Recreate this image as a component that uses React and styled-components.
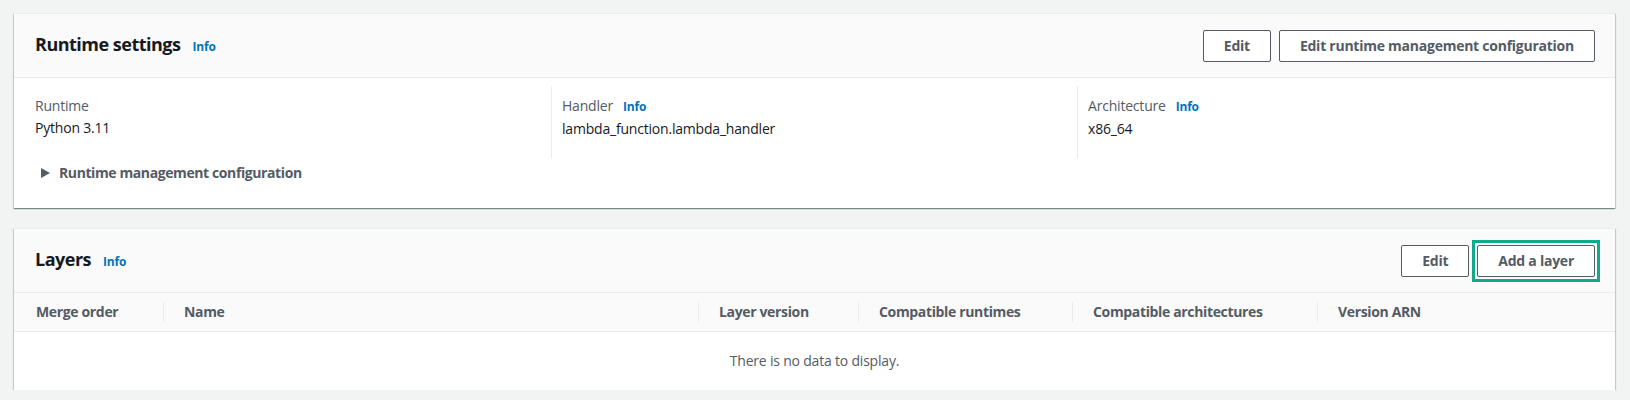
import React from 'react';
import styled, { createGlobalStyle } from 'styled-components';

const GlobalStyle = createGlobalStyle`
  body {
    margin: 0;
    background: #f2f3f3;
    font-family: "Open Sans", "Liberation Sans", Arial, sans-serif;
    font-size: 14px;
    line-height: 22px;
    color: #16191f;
  }
`;

const Page = styled.div`
  display: flex;
  flex-direction: column;
  gap: 20px;
  padding: 13px 15px 0 14px;
`;

const Card = styled.section`
  background: #ffffff;
  border-top: 1px solid #eaeded;
  box-shadow: 0 1px 1px 0 rgba(0, 28, 36, 0.3),
    1px 1px 1px 0 rgba(0, 28, 36, 0.15),
    -1px 1px 1px 0 rgba(0, 28, 36, 0.15);
`;

const CardHeader = styled.header`
  display: flex;
  align-items: center;
  justify-content: space-between;
  height: 63px;
  padding: 0 20px 0 21px;
  background: #fafafa;
  border-bottom: 1px solid #eaeded;
`;

const TitleGroup = styled.div`
  display: flex;
  align-items: baseline;
`;

const Title = styled.h2`
  margin: 0;
  font-size: 18px;
  line-height: 22px;
  font-weight: 700;
  letter-spacing: -0.5px;
  color: #16191f;
`;

const InfoLink = styled.a`
  margin-left: ${(p) => (p.$tight ? '10px' : '12px')};
  font-size: 12px;
  font-weight: 700;
  letter-spacing: -0.2px;
  color: #0073bb;
  text-decoration: none;
  cursor: pointer;
`;

const Actions = styled.div`
  display: flex;
  gap: 8px;
`;

const Button = styled.button`
  position: relative;
  height: 32px;
  padding: 0 20px;
  background: #ffffff;
  border: 1px solid #545b64;
  border-radius: 2px;
  font-family: inherit;
  font-size: 14px;
  font-weight: 700;
  letter-spacing: -0.25px;
  color: #545b64;
  cursor: pointer;

  &::after {
    content: '';
    display: ${(p) => (p.$highlighted ? 'block' : 'none')};
    position: absolute;
    inset: -6px;
    border: 3px solid #12a88a;
  }
`;

const Body = styled.div`
  padding: 8px 20px 24px 21px;
`;

const Columns = styled.div`
  display: grid;
  grid-template-columns: 516px 526px 1fr;
`;

const Column = styled.div`
  padding: 9px 0 18px ${(p) => (p.$first ? '0' : '10px')};
  border-left: ${(p) => (p.$first ? 'none' : '1px solid #eaeded')};
  letter-spacing: -0.2px;
`;

const Label = styled.div`
  display: flex;
  align-items: baseline;
  color: #545b64;
`;

const Value = styled.div`
  color: #16191f;
`;

const Expander = styled.div`
  display: flex;
  align-items: center;
  gap: 9px;
  margin-top: 4px;
  padding-left: 6px;
  font-weight: 700;
  letter-spacing: -0.4px;
  color: #545b64;
  cursor: pointer;
`;

const TableHead = styled.div`
  display: grid;
  grid-template-columns: 149px 535px 160px 214px 245px 1fr;
  height: 38px;
  background: #fafafa;
  border-bottom: 1px solid #eaeded;
`;

const HeadCell = styled.div`
  display: flex;
  align-items: center;
  padding-left: ${(p) => (p.$first ? '22px' : '0')};
  font-weight: 700;
  letter-spacing: -0.35px;
  color: #545b64;

  &::before {
    content: '';
    display: ${(p) => (p.$first ? 'none' : 'block')};
    width: 1px;
    height: 20px;
    margin-right: 20px;
    background: #eaeded;
  }
`;

const Empty = styled.div`
  display: flex;
  align-items: center;
  justify-content: center;
  height: 58px;
  letter-spacing: -0.2px;
  color: #545b64;
`;

const Caret = () => (
  <svg width="9" height="10" viewBox="0 0 9 10">
    <polygon points="0,0 9,5 0,10" fill="#545b64" />
  </svg>
);

const tableColumns = [
  'Merge order',
  'Name',
  'Layer version',
  'Compatible runtimes',
  'Compatible architectures',
  'Version ARN',
];

export default function App() {
  return (
    <>
      <GlobalStyle />
      <Page>
        <Card>
          <CardHeader>
            <TitleGroup>
              <Title>Runtime settings</Title>
              <InfoLink>Info</InfoLink>
            </TitleGroup>
            <Actions>
              <Button>Edit</Button>
              <Button>Edit runtime management configuration</Button>
            </Actions>
          </CardHeader>
          <Body>
            <Columns>
              <Column $first>
                <Label>Runtime</Label>
                <Value>Python 3.11</Value>
              </Column>
              <Column>
                <Label>
                  Handler <InfoLink $tight>Info</InfoLink>
                </Label>
                <Value>lambda_function.lambda_handler</Value>
              </Column>
              <Column>
                <Label>
                  Architecture <InfoLink $tight>Info</InfoLink>
                </Label>
                <Value>x86_64</Value>
              </Column>
            </Columns>
            <Expander>
              <Caret />
              Runtime management configuration
            </Expander>
          </Body>
        </Card>

        <Card>
          <CardHeader>
            <TitleGroup>
              <Title>Layers</Title>
              <InfoLink>Info</InfoLink>
            </TitleGroup>
            <Actions>
              <Button>Edit</Button>
              <Button $highlighted>Add a layer</Button>
            </Actions>
          </CardHeader>
          <TableHead>
            {tableColumns.map((name, i) => (
              <HeadCell key={name} $first={i === 0}>
                {name}
              </HeadCell>
            ))}
          </TableHead>
          <Empty>There is no data to display.</Empty>
        </Card>
      </Page>
    </>
  );
}
